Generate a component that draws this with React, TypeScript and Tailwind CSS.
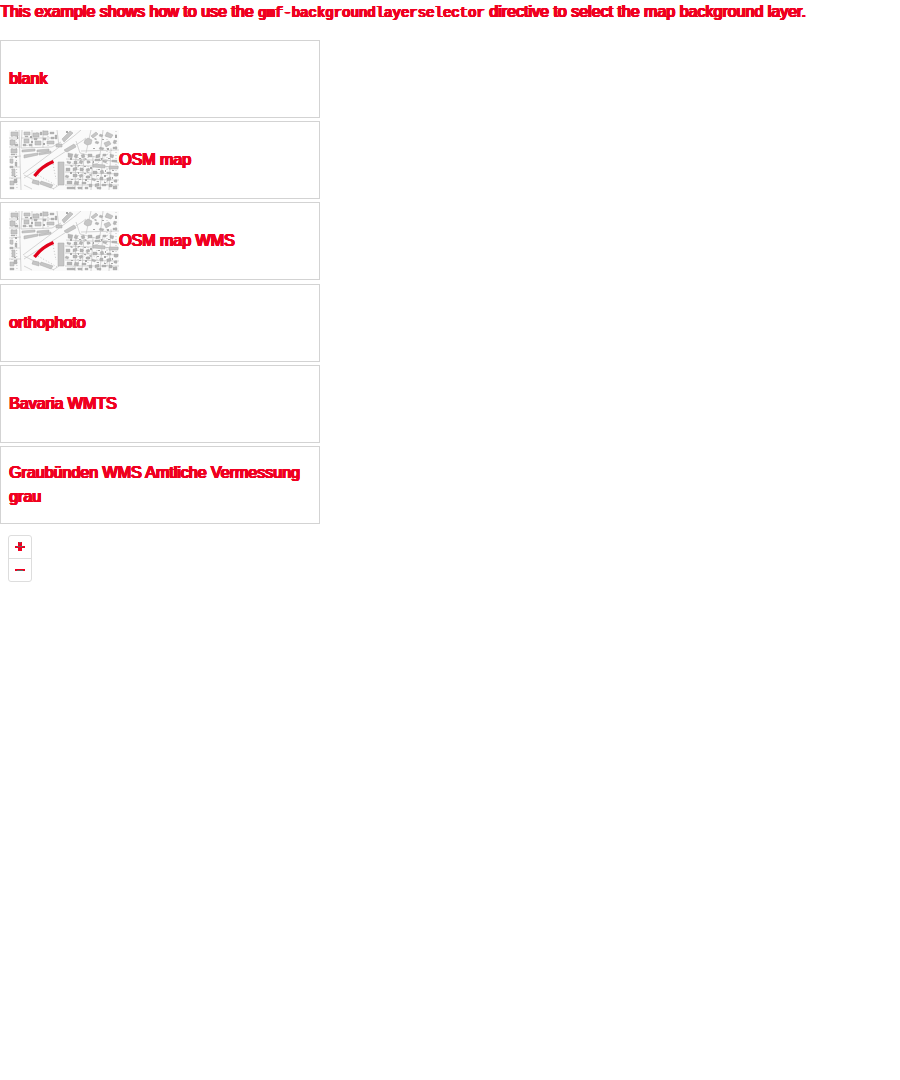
const buildings =
  "M2 2h7v4H2z M1 10h5v5H1z M2 19h6v4H2z M1 29h3v4H1z M3 39h3v7H3z M1 51h4v4H1z M15 2h6v3h-6z M24 3h6v4h-6z M34 1h5v4h-5z M15 9h5v4h-5z M26 11h6v4h-6z M38 11h7v3h-7z M13 20l13-1v2l-13 1z M28 20l12-1v2l-12 1z M15 25l14-2v2l-14 3z M30 23l12-2v2l-12 2z M53 9l8-8 3 2-9 9z M47 14h6v3h-6z M24 50l6 1v4l-7-2z M32 51l12 4-2 3-11-4z M55 20l10-6 2 3-9 5z M76 10l3-2 4 2-1 4-4 1-3-2z M82 6l5-4 2 2-5 4z M95 13l5-2 2 3-5 3z M98 2l6 3-2 3-6-2z M49 32h6v23h-6z M100 36h9v3h-9z M84 34l12 1v3l-12-1z";

const houses =
  "M6 14h3v2H6z M2 24h4v1H2z M6 32h2v4H6z M1 36h3v2H1z M5 49h3v4H5z M1 57h4v2H1z M14 14h3v2h-3z M20 14h3v2h-3z M31 2h2v3h-2z M41 2h4v2h-4z M46 5h2v4h-2z M25 8h3v2h-3z M34 8h3v2h-3z M42 7h3v2h-3z M16 6h3v1h-3z M87 11l3 1-1 2-3-1z M91 4l3 1-1 2-3-1z M105 10l3 1-2 3-2-1z M91 17l4 1-1 2-4-1z M104 17h4v2h-4z M59 23l5 1-1 4-4-1z M66 24l3 1-1 3-3-1z M72 25l3-1 1 3-3 1z M79 24h4v3h-4z M87 25l4-1v3l-4 1z M94 24h3v2h-3z M101 24l4 1-1 3-3-1z M58 31l4 1-1 2-3-1z M65 31h3v3h-3z M71 30l3 1-1 3-3-1z M78 31h3v2h-3z M86 29h5v2h-5z M94 30l4 1-1 2-3-1z M103 30h5v2h-5z M57 38h4v3h-4z M64 38l4-1v3l-4 1z M71 38h3v3h-3z M77 39l3-1 1 2-3 2z M84 41h4v3h-4z M91 41l3-1 1 3-3 1z M98 42h4v2h-4z M105 43h4v3h-4z M57 45l3 1-1 2-3-1z M64 44h4v3h-4z M70 45l3-1 1 2-3 2z M77 46h4v2h-4z M83 48l4 1-1 2-3-1z M91 47h3v3h-3z M98 48l4-1v3l-4 1z M105 50h3v2h-3z M58 51h5v3h-5z M66 51l4 1-1 3-4-1z M73 52h4v2h-4z M80 54h3v3h-3z M86 54l4-1v3l-4 1z M93 54h4v2h-4z M100 54h3v3h-3z M58 57h8v2h-8z M69 57h4v2h-4z M76 57h3v2h-3z M88 57h4v2h-4z M104 56h4v3h-4z";

const annexes =
  "M61 28h2v2h-2z M70 28h2v1h-2z M76 28l2 1-1 1-2-1z M84 31h1v2h-1z M92 28h1v2h-1z M99 28h2v1h-2z M62 35l2 1-1 1-2-1z M69 35h2v1h-2z M75 36h2v1h-2z M81 37h2v2h-2z M89 39h2v1h-2z M96 40h1v2h-1z M103 40h2v1h-2z M61 42h2v2h-2z M69 42h1v2h-1z M75 43h2v1h-2z M81 44l2 1-1 1-2-1z M88 45h2v1h-2z M95 45h2v2h-2z M103 47h1v2h-1z M62 49h2v1h-2z M70 49h2v1h-2z M76 49h2v2h-2z M88 51h2v1h-2z M95 52h2v1h-2z M102 52h2v1h-2z M8 6h1v3H8z M6 26h2v2H6z M5 46h2v1H5z M21 6h2v2h-2z M22 11h2v2h-2z M34 13h2v2h-2z M57 1h2v2h-2z M86 8l2 1-1 1-2-1z M93 9h2v1h-2z M106 5h2v3h-2z M84 18h2v1h-2z M98 18h2v2h-2z";

function MapThumbnail() {
  return (
    <svg className="h-[60px] w-[110px] shrink-0" viewBox="0 0 110 60" aria-hidden="true">
      <rect width="110" height="60" fill="#fafafa" />
      <g fill="none" stroke="#c4c4c4" strokeWidth=".7">
        <path d="M10 0l2 60M13 0l-1 18M0 27l12-1M14 44L65 6l7-6M15 48L73 11l4-3M12 18l31-1 9-5M34 0v18M23 0v18M12 8h36M0 8h10M0 17h11M0 37h11M0 48h12M48 0l2 16M67 11l4 12 39 10M67 23l-1 37M75 24l-2 36M84 26l-2 34M94 24l-3 36M102 18l-2 42M56 35l54 2M56 42l54 2M56 49l54 1M72 21l38-1M82 0l-5 23M94 0l-3 25M15 45l10 5 20 9M50 55l-6 4M15 55l8 4M57 29l49 2M56 55h54" />
        <path strokeDasharray="1 2" stroke="#afafaf" d="M44 34l3 15M29 45l19 11M7 0l1 60M3 3v54M72 29l34 12M61 32l43 24M105 18L63 57M18 3v14M28 2v15M39 3v13M69 24v34M79 27v30M88 27v31M98 3v52M107 1v57" />
      </g>
      <path d={buildings} fill="#c5c5c5" stroke="#aaaaaa" strokeWidth=".5" />
      <path d={houses} fill="#b4b4b4" stroke="#a5a5a5" strokeWidth=".3" />
      <path d={annexes} fill="#a8a8a8" />
      <path d="M25.5 46Q33 36 44.5 31.5" fill="none" stroke="#e2001a" strokeWidth="3.4" />
    </svg>
  );
}

const layers = [
  { name: "blank", thumbnail: false },
  { name: "OSM map", thumbnail: true },
  { name: "OSM map WMS", thumbnail: true },
  { name: "orthophoto", thumbnail: false },
  { name: "Bavaria WMTS", thumbnail: false },
  { name: "Graubünden WMS Amtliche Vermessung grau", thumbnail: false },
];

export default function App() {
  return (
    <main className="min-h-screen bg-white font-['Liberation_Sans',sans-serif] text-base leading-6 text-[#f00020] [text-shadow:.9px_0_#f00020,-.6px_0_#f00020,.5px_0_#f00020,.9px_0_#f00020,-.6px_0_#f00020,0_0_#f00020,0_0_#f00020,.5px_0_#f00020]">
      <p className="mb-4 h-6 whitespace-nowrap">
        This example shows how to use the{" "}
        <code className="font-['Liberation_Mono',monospace] text-sm leading-6">gmf-backgroundlayerselector</code>{" "}
        directive to select the map background layer.
      </p>
      <ul className="w-80">
        {layers.map((layer) => (
          <li key={layer.name} className="mb-[3.2px] flex h-[78px] items-center border border-[#d3d3d3] px-2">
            {layer.thumbnail && <MapThumbnail />}
            <span>{layer.name}</span>
          </li>
        ))}
      </ul>
      <div className="p-2">
        <div className="flex w-6 flex-col divide-y divide-[#ddd] rounded-[3px] border border-[#ddd]">
          <button className="flex h-[23px] items-center justify-center" aria-label="Zoom in">
            <svg className="size-[10px]" viewBox="0 0 10 10"><path d="M0 4h3V0h4v4h3v2H7v3H3V6H0z" fill="#f00020" /><path d="M2 4.5h6M4 .5h2" stroke="#666" /></svg>
          </button>
          <button className="flex h-[22px] items-center justify-center" aria-label="Zoom out">
            <svg className="size-[10px]" viewBox="0 0 10 10"><path d="M0 4h10v2H0z" fill="#f00020" /><path d="M2 5.5h6" stroke="#666" /></svg>
          </button>
        </div>
      </div>
    </main>
  );
}
